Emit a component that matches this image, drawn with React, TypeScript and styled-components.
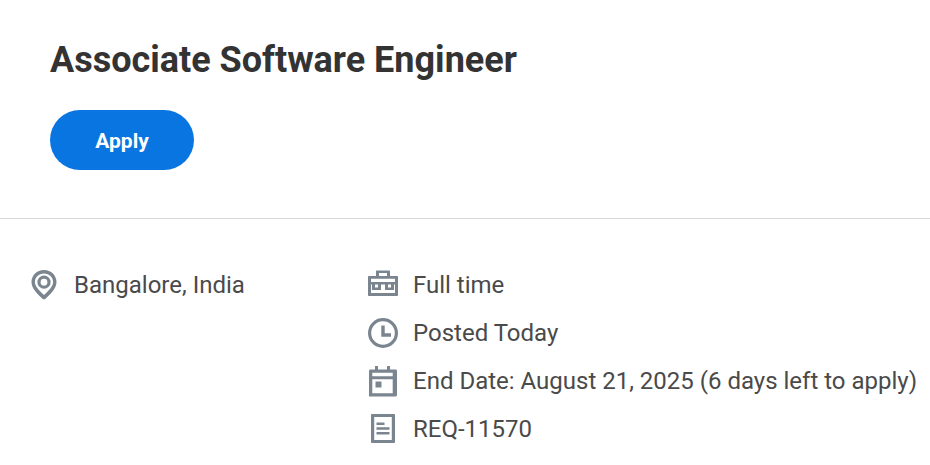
import React from 'react'
import styled, { createGlobalStyle } from 'styled-components'

const GlobalStyle = createGlobalStyle`
  html, body {
    margin: 0;
    padding: 0;
    background: #fff;
    overflow: hidden;
  }
  body {
    font-family: Roboto, "Liberation Sans", sans-serif;
  }
`

const Page = styled.div`
  width: 930px;
  height: 465px;
  overflow: hidden;
`

const Header = styled.header`
  height: 219px;
  box-sizing: border-box;
  padding: 39px 50px 0;
  border-bottom: 1px solid #d9d9d9;
`

const Title = styled.h1`
  margin: 0 0 28px;
  font-size: 36px;
  line-height: 43px;
  font-weight: 700;
  color: #333333;
`

const ApplyButton = styled.button`
  display: block;
  width: 144px;
  height: 60px;
  padding: 2px 0 0;
  border: 0;
  border-radius: 30px;
  background: #0875e1;
  color: #fff;
  font-family: inherit;
  font-size: 21px;
  font-weight: 700;
`

const Details = styled.div`
  display: grid;
  grid-template-columns: 339px 1fr;
  padding: 50px 0 0 28px;
`

const List = styled.ul`
  margin: 0;
  padding: 0;
  list-style: none;
  display: flex;
  flex-direction: column;
  gap: 16px;
`

const Item = styled.li`
  display: flex;
  align-items: center;
  gap: 14px;
  height: 32px;
  font-size: 24px;
  color: #4a4a4a;
  white-space: nowrap;
`

const Icon = styled.svg`
  width: 32px;
  height: 32px;
  flex: none;
  fill: #7b858f;
`

const PinIcon = () => (
  <Icon viewBox="0 0 32 32">
    <path
      fillRule="evenodd"
      d="M16 1C8.800 1 3.500 6.500 3.500 13c0 4.800 3.500 10.200 11 16.700.9.800 2.100.8 3 0 7.500-6.500 11-11.900 11-16.700C28.500 6.500 23.200 1 16 1zm0 3.400c5.200 0 9.100 3.900 9.100 8.600 0 3.300-2.700 7.400-9.100 13.100C9.600 20.400 6.900 16.300 6.900 13c0-4.700 3.900-8.600 9.100-8.600z"
    />
    <path
      fillRule="evenodd"
      d="M16 6.600a6.600 6.600 0 1 0 0 13.200 6.600 6.600 0 0 0 0-13.200zm0 3.200a3.400 3.400 0 1 1 0 6.800 3.400 3.400 0 0 1 0-6.800z"
    />
  </Icon>
)

const BriefcaseIcon = () => (
  <Icon viewBox="-1 0 32 32">
    <path
      fillRule="evenodd"
      d="M9 1.500h12c.6 0 1 .4 1 1V7h7c.6 0 1 .4 1 1v18c0 .6-.4 1-1 1H1c-.6 0-1-.4-1-1V8c0-.6.4-1 1-1h7V2.500c0-.6.4-1 1-1zM11 4v3h8V4h-8zM3 9.800V13h24V9.800H3zm0 5.700V24h24v-8.500h-1V21h-9v-5.500h-4V21H4v-5.500H3zm4 0v3h3v-3H7zm13 0v3h3v-3h-3z"
    />
  </Icon>
)

const ClockIcon = () => (
  <Icon viewBox="-1 0 32 32">
    <path
      fillRule="evenodd"
      d="M15 1a15 15 0 1 0 0 30 15 15 0 0 0 0-30zm0 3.200a11.800 11.800 0 1 1 0 23.600 11.800 11.800 0 0 1 0-23.600z"
    />
    <path d="M13.300 8.500h3.400v7.800h6.300v3.400h-9.700z" />
  </Icon>
)

const CalendarIcon = () => (
  <Icon viewBox="-1 0 32 32">
    <path
      fillRule="evenodd"
      d="M7 1h3v3.500h9V1h3v3.500h5.500c.8 0 1.500.7 1.500 1.500v24c0 .8-.7 1.500-1.500 1.500h-26C.7 31.500 1 30.800 1 30V6c0-.8.700-1.500 1.500-1.500H7V1zM4.300 7.800v3.400h20.400V7.800H4.300zm0 6.400v14h20.400v-14H4.300z"
    />
    <path d="M7.500 16.500h6v6h-6z" />
  </Icon>
)

const DocumentIcon = () => (
  <Icon viewBox="-1 0 32 32">
    <path
      fillRule="evenodd"
      d="M4 1h22c.6 0 1 .4 1 1v27c0 .6-.4 1-1 1H4c-.6 0-1-.4-1-1V2c0-.6.4-1 1-1zm2.200 3v23h17.600V4H6.200z"
    />
    <path d="M8.500 9.500h8v2.500h-8zM8.500 14.300h13v2.500h-13zM8.500 19h13v2.500h-13z" />
  </Icon>
)

export default function App() {
  return (
    <Page>
      <GlobalStyle />
      <Header>
        <Title>Associate Software Engineer</Title>
        <ApplyButton>Apply</ApplyButton>
      </Header>
      <Details>
        <List>
          <Item>
            <PinIcon />
            Bangalore, India
          </Item>
        </List>
        <List>
          <Item>
            <BriefcaseIcon />
            Full time
          </Item>
          <Item>
            <ClockIcon />
            Posted Today
          </Item>
          <Item>
            <CalendarIcon />
            End Date: August 21, 2025 (6 days left to apply)
          </Item>
          <Item>
            <DocumentIcon />
            REQ-11570
          </Item>
        </List>
      </Details>
    </Page>
  )
}
